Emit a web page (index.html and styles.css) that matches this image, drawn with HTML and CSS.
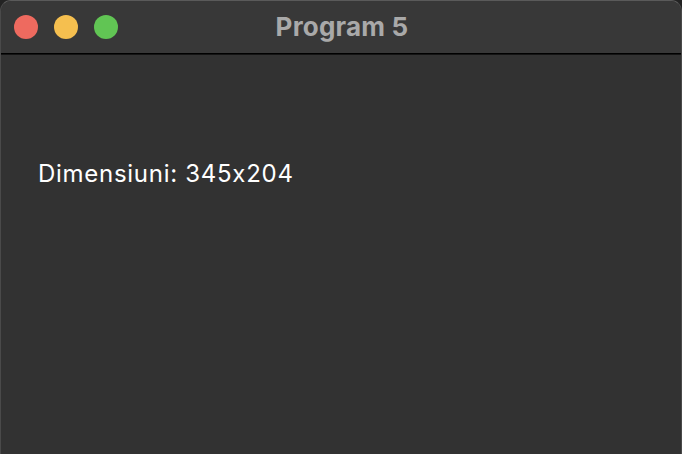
FILE: index.html
```html
<!DOCTYPE html>
<html lang="ro">
<head>
<meta charset="utf-8">
<title>Program 5</title>
<link rel="stylesheet" href="styles.css">
</head>
<body>
<div class="window">
  <header class="titlebar">
    <div class="lights">
      <span class="light red"></span>
      <span class="light yellow"></span>
      <span class="light green"></span>
    </div>
    <div class="title">Program 5</div>
  </header>
  <main class="content">
    <p class="label">Dimensiuni: 345x204</p>
  </main>
</div>
</body>
</html>
```
FILE: styles.css
```css
html, body {
  margin: 0;
  padding: 0;
  width: 682px;
  height: 454px;
  background: #232323;
  overflow: hidden;
}
.window {
  width: 682px;
  height: 454px;
  box-sizing: border-box;
  border-radius: 11px 11px 0 0;
  border-top: 1px solid #5a5a5a;
  border-left: 1px solid #4a4a4a;
  border-right: 1px solid #4a4a4a;
  background: #323232;
  overflow: hidden;
  display: flex;
  flex-direction: column;
}
.titlebar {
  height: 52px;
  flex: none;
  background: #383838;
  border-bottom: 1px solid #000;
  display: flex;
  align-items: center;
  position: relative;
}
.lights {
  display: flex;
  gap: 16px;
  padding-left: 13px;
  padding-bottom: 1px;
}
.light {
  width: 24px;
  height: 24px;
  border-radius: 50%;
  display: block;
}
.red { background: #ee6a5f; }
.yellow { background: #f5bf4f; }
.green { background: #61c554; }
.title {
  position: absolute;
  left: 0;
  right: 0;
  top: 0;
  bottom: 0;
  display: flex;
  align-items: center;
  justify-content: center;
  font-family: Inter, "Liberation Sans", sans-serif;
  font-feature-settings: "calt" 0;
  font-weight: 700;
  font-size: 26px;
  letter-spacing: 0.2px;
  color: #a9a9a9;
  padding-left: 2px;
  padding-bottom: 2px;
}
.content {
  flex: 1;
  padding: 104px 0 0 37px;
  border-top: 1px solid #141414;
}
.label {
  margin: 0;
  font-family: Inter, "Liberation Sans", sans-serif;
  font-feature-settings: "calt" 0;
  font-size: 24px;
  letter-spacing: 0.72px;
  color: #ffffff;
  line-height: 30px;
}
```
